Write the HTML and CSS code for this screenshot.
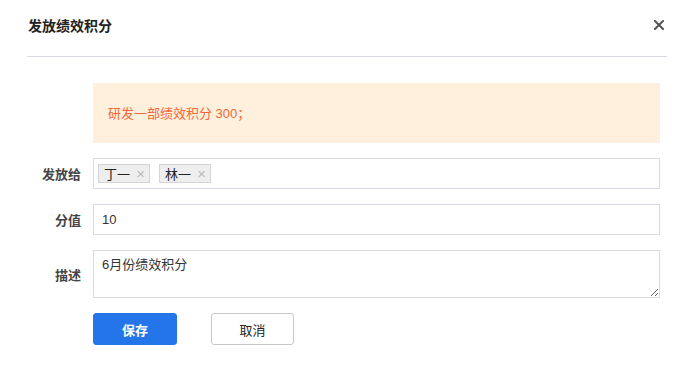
FILE: index.html
```html
<!DOCTYPE html>
<html lang="zh-CN">
<head>
    <meta charset="UTF-8">
    <meta name="viewport" content="width=device-width, initial-scale=1.0">
    <title>发放绩效积分</title>
    <link rel="stylesheet" href="styles.css">
</head>
<body>
    <div class="dialog">
        <header class="dialog-header">
            <h1>发放绩效积分</h1>
            <button class="close-btn" aria-label="关闭">
                <svg width="10" height="10" viewBox="0 0 10 10">
                    <path d="M1 1 L9 9 M9 1 L1 9" stroke="#555" stroke-width="2" stroke-linecap="square"/>
                </svg>
            </button>
        </header>

        <div class="dialog-body">
            <div class="alert">研发一部绩效积分 300；</div>

            <div class="form-row">
                <label>发放给</label>
                <div class="field tag-field">
                    <span class="tag">丁一<i class="tag-close">×</i></span>
                    <span class="tag">林一<i class="tag-close">×</i></span>
                </div>
            </div>

            <div class="form-row">
                <label for="score">分值</label>
                <input id="score" class="field" type="text" value="10">
            </div>

            <div class="form-row">
                <label for="desc">描述</label>
                <textarea id="desc" class="field textarea">6月份绩效积分</textarea>
            </div>

            <div class="actions">
                <button class="btn btn-primary">保存</button>
                <button class="btn btn-default">取消</button>
            </div>
        </div>
    </div>
</body>
</html>
```

FILE: styles.css
```css
:root {
    --text-color: #333;
    --label-color: #444;
    --border-color: #d9dbe3;
    --primary-color: #2475e9;
    --warn-bg: #fef0dd;
    --warn-text: #f2683a;
}

* {
    margin: 0;
    padding: 0;
    box-sizing: border-box;
}

body {
    font-family: "Liberation Sans", "Noto Sans CJK SC", sans-serif;
    font-size: 13px;
    color: var(--text-color);
    background-color: #fff;
}

.dialog-header {
    display: flex;
    justify-content: space-between;
    align-items: center;
    height: 57px;
    margin: 0 27px;
    padding: 0 1px 6px 1px;
    border-bottom: 1px solid var(--border-color);
}

.dialog-header h1 {
    font-size: 14px;
    font-weight: 700;
    color: #222;
}

.close-btn {
    background: transparent;
    border: none;
    cursor: pointer;
    display: flex;
    margin-right: 2px;
}

.dialog-body {
    padding: 26px 34px 0 27px;
}

.alert {
    margin-left: 66px;
    height: 60px;
    padding: 0 15px 2px;
    display: flex;
    align-items: center;
    background-color: var(--warn-bg);
    color: var(--warn-text);
    margin-bottom: 15px;
}

.form-row {
    display: flex;
    align-items: center;
    margin-bottom: 15px;
}

.form-row label {
    width: 66px;
    padding-right: 12px;
    text-align: right;
    font-weight: 700;
    color: var(--label-color);
}

.field {
    flex: 1;
    height: 31px;
    border: 1px solid var(--border-color);
    background: #fff;
    font: inherit;
    color: var(--text-color);
    padding: 0 8px;
    outline: none;
}

.tag-field {
    display: flex;
    align-items: center;
    gap: 9px;
    padding: 0 4px;
}

.tag {
    display: inline-flex;
    align-items: center;
    width: 52px;
    height: 19px;
    padding: 0 4px 0 5px;
    background-color: #eee;
    border: 1px solid #d4d4d8;
    color: #222;
}

.tag-close {
    font-style: normal;
    color: #bbb;
    font-size: 15px;
    margin-left: auto;
}

.textarea {
    height: 48px;
    padding: 6px 8px;
    resize: vertical;
    line-height: 1.3;
}

.actions {
    display: flex;
    gap: 34px;
    margin-left: 66px;
}

.btn {
    width: 84px;
    height: 32px;
    border-radius: 3px;
    font: inherit;
    cursor: pointer;
}

.btn-primary {
    background-color: var(--primary-color);
    border: 1px solid var(--primary-color);
    color: #fff;
    font-weight: 700;
}

.btn-default {
    background-color: #fff;
    border: 1px solid #c8c8cc;
    color: #222;
    width: 83px;
}
```
